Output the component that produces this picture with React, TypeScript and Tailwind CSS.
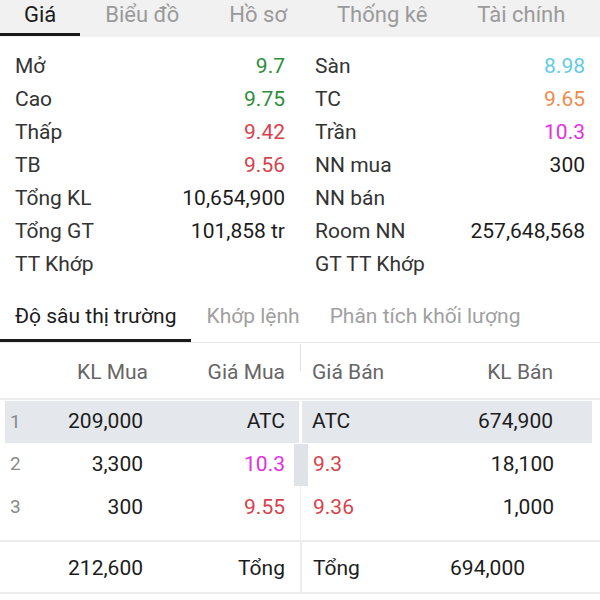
import React from 'react';

const TOP_TABS = ['Giá', 'Biểu đồ', 'Hồ sơ', 'Thống kê', 'Tài chính'];
const SUB_TABS = ['Độ sâu thị trường', 'Khớp lệnh', 'Phân tích khối lượng'];

type Cell = { label: string; value?: string; color?: string };

const LEFT: Cell[] = [
  { label: 'Mở', value: '9.7', color: 'text-[#2e8d3a]' },
  { label: 'Cao', value: '9.75', color: 'text-[#2e8d3a]' },
  { label: 'Thấp', value: '9.42', color: 'text-[#d8424b]' },
  { label: 'TB', value: '9.56', color: 'text-[#d8424b]' },
  { label: 'Tổng KL', value: '10,654,900' },
  { label: 'Tổng GT', value: '101,858 tr' },
  { label: 'TT Khớp' },
];

const RIGHT: Cell[] = [
  { label: 'Sàn', value: '8.98', color: 'text-[#62cbe6]' },
  { label: 'TC', value: '9.65', color: 'text-[#ef8a4c]' },
  { label: 'Trần', value: '10.3', color: 'text-[#e230e2]' },
  { label: 'NN mua', value: '300' },
  { label: 'NN bán' },
  { label: 'Room NN', value: '257,648,568' },
  { label: 'GT TT Khớp' },
];

const ROWS = [
  { idx: '1', buyVol: '209,000', buyPx: 'ATC', buyColor: '', sellPx: 'ATC', sellColor: '', sellVol: '674,900' },
  { idx: '2', buyVol: '3,300', buyPx: '10.3', buyColor: 'text-[#e230e2]', sellPx: '9.3', sellColor: 'text-[#d8424b]', sellVol: '18,100' },
  { idx: '3', buyVol: '300', buyPx: '9.55', buyColor: 'text-[#d8424b]', sellPx: '9.36', sellColor: 'text-[#d8424b]', sellVol: '1,000' },
];

function StatColumn({ items }: { items: Cell[] }) {
  return (
    <div className="w-[300px] pl-[15px] pr-[15px]">
      {items.map((it) => (
        <div key={it.label} className="flex h-[33px] items-center justify-between">
          <span className="text-[#333]">{it.label}</span>
          <span className={it.color ?? 'text-[#1c1c1c]'}>{it.value ?? ''}</span>
        </div>
      ))}
    </div>
  );
}

export default function App() {
  return (
    <div
      className="relative h-[600px] w-[600px] overflow-hidden bg-white text-[21px]"
      style={{ fontFamily: 'Roboto, "Noto Sans", sans-serif' }}
    >
      {/* top tabs */}
      <div className="flex h-[37px] bg-[#f1f1f1] text-[22px]">
        {TOP_TABS.map((t, i) => (
          <div
            key={t}
            className={
              i === 0
                ? 'flex h-[36px] shrink-0 items-center border-b-[3px] border-[#1a1a1a] px-[24px] pb-[5px] text-[#1c1c1c]'
                : 'flex h-[36px] shrink-0 items-center border-b-[3px] border-transparent px-[25px] pb-[5px] text-[#9a9a9a]'
            }
          >
            {t}
          </div>
        ))}
      </div>

      {/* stats */}
      <div className="flex pt-[13px]">
        <StatColumn items={LEFT} />
        <StatColumn items={RIGHT} />
      </div>

      {/* sub tabs */}
      <div className="mt-[12px] flex h-[50px] border-b border-[#e6e6e6]">
        {SUB_TABS.map((t, i) => (
          <div
            key={t}
            className={
              i === 0
                ? 'flex items-center border-b-[3px] border-[#1a1a1a] px-[15px] pt-[2px] text-[#1c1c1c]'
                : 'flex items-center border-b-[3px] border-transparent px-[15px] pt-[2px] text-[#a0a0a0]'
            }
          >
            {t}
          </div>
        ))}
      </div>

      {/* table header */}
      <div className="flex h-[57px] items-center border-b-2 border-[#ececec] pt-[4px] text-[#666]">
        <div className="flex w-[300px] items-center">
          <div className="w-[148px] text-right">KL Mua</div>
          <div className="w-[137px] text-right">Giá Mua</div>
        </div>
        <div className="relative flex w-[300px] items-center pl-[12px]">
          <div className="absolute left-0 top-[-13px] h-[27px] w-px bg-[#e2e2e2]" />
          <div className="w-[140px]">Giá Bán</div>
          <div className="w-[101px] text-right">KL Bán</div>
        </div>
      </div>

      {/* rows */}
      <div className="relative pt-[1px]">
        {ROWS.map((r, i) =>
          i === 0 ? (
            <div key={r.idx} className="flex h-[42px] items-center">
              <div className="ml-[5px] flex h-full w-[294px] items-center bg-[#e4e7eb]">
                <div className="flex w-[138px] items-center justify-between pl-[5px]">
                  <span className="text-[19px] text-[#8a8a8a]">{r.idx}</span>
                  <span className="text-[#1c1c1c]">{r.buyVol}</span>
                </div>
                <div className={`w-[142px] text-right ${r.buyColor || 'text-[#1c1c1c]'}`}>{r.buyPx}</div>
              </div>
              <div className="ml-[3px] flex h-full w-[290px] items-center bg-[#e4e7eb] pl-[10px]">
                <div className={`w-[140px] ${r.sellColor || 'text-[#1c1c1c]'}`}>{r.sellPx}</div>
                <div className="w-[101px] text-right text-[#1c1c1c]">{r.sellVol}</div>
              </div>
            </div>
          ) : (
            <div key={r.idx} className="flex h-[43px] items-center">
              <div className="flex h-full w-[300px] items-center">
                <div className="flex w-[143px] items-center justify-between pl-[10px]">
                  <span className="text-[19px] text-[#8a8a8a]">{r.idx}</span>
                  <span className="text-[#1c1c1c]">{r.buyVol}</span>
                </div>
                <div className={`w-[142px] text-right ${r.buyColor}`}>{r.buyPx}</div>
              </div>
              <div className="flex h-full w-[300px] items-center border-l border-[#f0f0f0] pl-[12px]">
                <div className={`w-[140px] ${r.sellColor}`}>{r.sellPx}</div>
                <div className="w-[101px] text-right text-[#1c1c1c]">{r.sellVol}</div>
              </div>
            </div>
          ),
        )}
        <div className="flex h-[11px]">
          <div className="w-[300px]" />
          <div className="w-[300px] border-l border-[#f0f0f0]" />
        </div>
        {/* scroll handle */}
        <div className="absolute left-[294px] top-[44px] h-[42px] w-[14px] bg-[#dfe2e6]" />
      </div>

      {/* totals */}
      <div className="flex h-[54px] items-center border-y-2 border-[#ececec]">
        <div className="flex h-full w-[300px] items-center pt-[3px]">
          <div className="w-[143px] text-right text-[#1c1c1c]">212,600</div>
          <div className="w-[142px] text-right text-[#1c1c1c]">Tổng</div>
        </div>
        <div className="flex h-full w-[300px] items-center border-l-2 border-[#ececec] pl-[11px] pt-[3px]">
          <div className="w-[100px] text-[#1c1c1c]">Tổng</div>
          <div className="w-[112px] text-right text-[#1c1c1c]">694,000</div>
        </div>
      </div>
    </div>
  );
}
